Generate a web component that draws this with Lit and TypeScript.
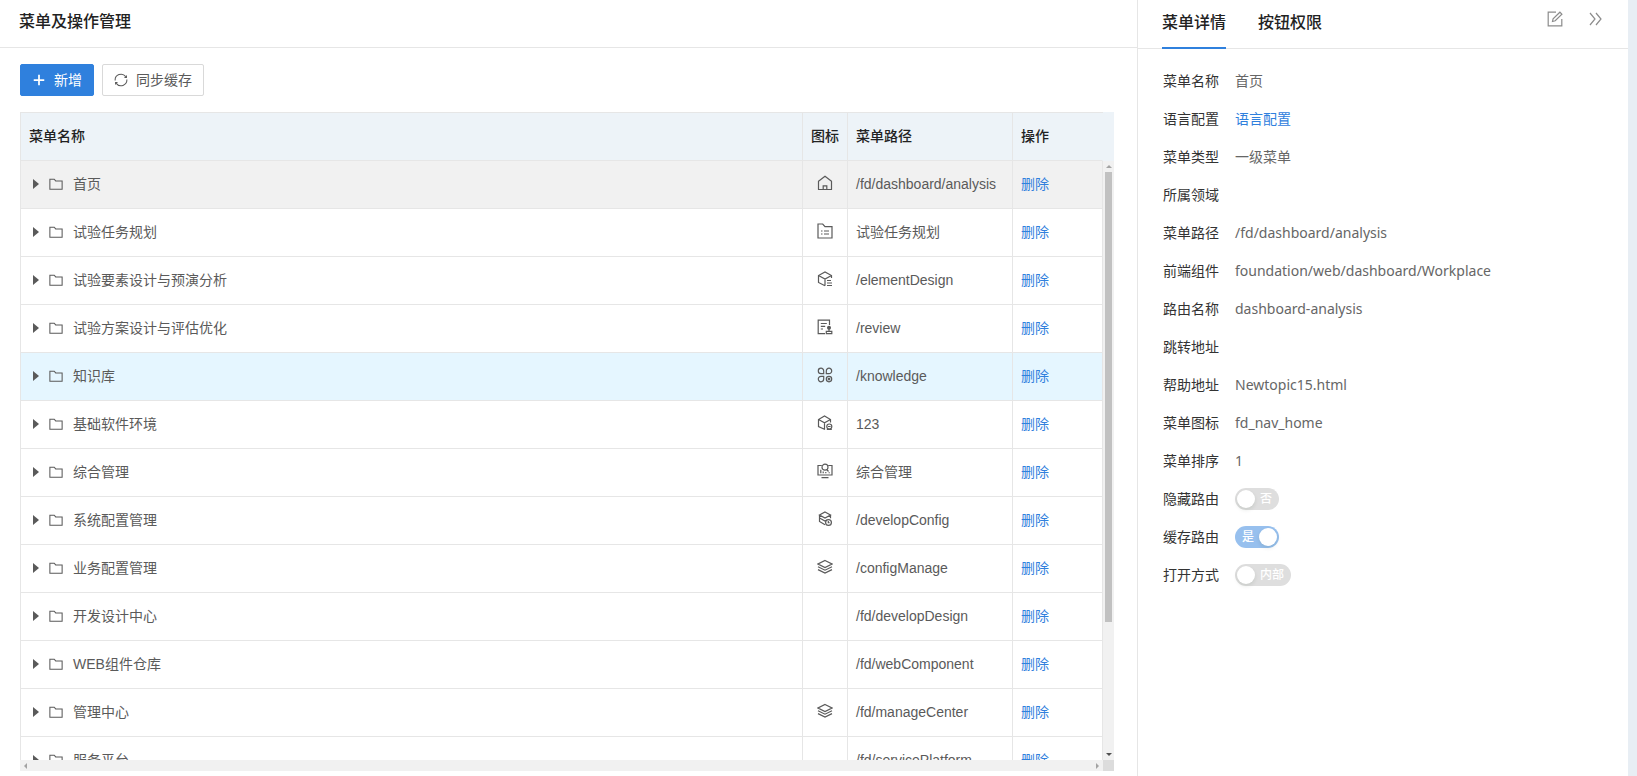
import { LitElement, html, css, svg, nothing, type TemplateResult } from "lit";
import { customElement, property, state } from "lit/decorators.js";
import { classMap } from "lit/directives/class-map.js";

interface MenuRow {
  name: string;
  icon: string;
  path: string;
}

interface DetailField {
  label: string;
  value?: string;
  href?: string;
  toggle?: boolean;
}

const ROWS: MenuRow[] = [
  { name: "首页", icon: "home", path: "/fd/dashboard/analysis" },
  { name: "试验任务规划", icon: "folderList", path: "试验任务规划" },
  { name: "试验要素设计与预演分析", icon: "cubeList", path: "/elementDesign" },
  { name: "试验方案设计与评估优化", icon: "review", path: "/review" },
  { name: "知识库", icon: "petals", path: "/knowledge" },
  { name: "基础软件环境", icon: "cubeBadge", path: "123" },
  { name: "综合管理", icon: "monitor", path: "综合管理" },
  { name: "系统配置管理", icon: "layersBadge", path: "/developConfig" },
  { name: "业务配置管理", icon: "layers", path: "/configManage" },
  { name: "开发设计中心", icon: "", path: "/fd/developDesign" },
  { name: "WEB组件仓库", icon: "", path: "/fd/webComponent" },
  { name: "管理中心", icon: "layers", path: "/fd/manageCenter" },
  { name: "服务平台", icon: "", path: "/fd/servicePlatform" },
];

const FIELDS: DetailField[] = [
  { label: "菜单名称", value: "首页" },
  { label: "语言配置", value: "语言配置", href: "#lang" },
  { label: "菜单类型", value: "一级菜单" },
  { label: "所属领域", value: "" },
  { label: "菜单路径", value: "/fd/dashboard/analysis" },
  { label: "前端组件", value: "foundation/web/dashboard/Workplace" },
  { label: "路由名称", value: "dashboard-analysis" },
  { label: "跳转地址", value: "" },
  { label: "帮助地址", value: "Newtopic15.html" },
  { label: "菜单图标", value: "fd_nav_home" },
  { label: "菜单排序", value: "1" },
  { label: "隐藏路由", value: "否", toggle: false },
  { label: "缓存路由", value: "是", toggle: true },
  { label: "打开方式", value: "内部", toggle: false },
];

const GLYPHS: Record<string, TemplateResult> = {
  plus: svg`<path d="M8 2v12M2 8h12" stroke-width="2"/>`,
  sync: svg`<path d="M1.300 8.600A6.700 6.700 0 0 1 13.400 4.200M14.700 7.400A6.700 6.700 0 0 1 2.600 11.800"/><path d="M14.800 2.200v3.400h-3.400zM1.200 13.800v-3.400h3.400z" fill="currentColor" stroke="none"/>`,
  folder: svg`<path d="M1 2.500h5l1.600 2h7.400v9.500H1z"/>`,
  home: svg`<path d="M1.500 6.200 8 1.200l6.500 5v8.300h-13z" stroke-linejoin="round"/><path d="M6.200 14.500v-3.700h3.600v3.700"/>`,
  folderList: svg`<path d="M1 1h4.700l2.300 2.700h7v11.300H1z"/><path d="M4 8h1.500M7 8h5M4 11h1.500M7 11h5"/>`,
  cubeList: svg`<path d="M8 14.800 1.500 11.500V4.500L8 1l6.500 3.500v2.500M1.500 4.500 8 8l6.500-3.500M8 8v6.800"/><path d="M10 9.500h4M10 12h5M10 14.500h5"/>`,
  review: svg`<path d="M8 14.700H1.200V1.200h11.300v4.800"/><path d="M3.800 4.500h6M3.800 7.300h4.400M3.800 10h2.200"/><circle cx="12" cy="8.800" r="1.400" fill="currentColor"/><path d="M12 9.500v2.700M9.300 14.700v-2.400h5.500v2.400z"/>`,
  petals: svg`<path d="M4 1.200A2.700 2.700 0 1 0 4 6.600h2.700V3.900A2.700 2.700 0 0 0 4 1.200zM12 1.200A2.700 2.700 0 0 0 9.300 3.900v2.700H12a2.700 2.700 0 1 0 0-5.400zM4 9.400h2.700v2.700A2.700 2.700 0 1 1 4 9.400z"/><circle cx="12" cy="12.100" r="2.700"/><circle cx="12" cy="12.100" r=".8"/>`,
  cubeBadge: svg`<path d="M8 14.500 1.500 11.500V4.500L7.500 1l6 3.500v3M1.500 4.500 7.500 7.700l6-3.200M7.500 7.700v6.800"/><circle cx="12.300" cy="11.500" r="2.500"/><path d="M11 11.500h2.600M9.800 14.400h5"/>`,
  monitor: svg`<path d="M4.800 2.500H1v9.500h14V2.500h-3.800M4.500 14.600h7"/><circle cx="8" cy="4.200" r="3"/><path d="M9.800 6.500l1.700 2M3.800 10.200V6.800M6.200 10.200V8.500M8.800 10.200V9M12.200 10.200V9.200"/>`,
  layersBadge: svg`<path d="M8 1 13.500 4 8 7 2.500 4zM2.500 4v3L8 10l2-1M2.500 7.200v3.300L8 13.800M13.500 4v3.200"/><circle cx="11.500" cy="11.500" r="2.900"/><path d="M11.300 10v1.700h1.200"/>`,
  layers: svg`<path d="M8 1.500 15 5 8 8.500 1 5z"/><path d="M1 7.800 8 11.200l7-3.400M1 10.600 8 14l7-3.400"/>`,
  edit: svg`<path d="M9 1.200H1.200v13.600h13.600V8"/><path d="M5.500 10.500l.6-2.800 6.800-6.500 2 2.100-6.700 6.500z"/>`,
  collapse: svg`<path d="M2 2l5 6-5 6M8 2l5 6-5 6"/>`,
};

@customElement("ui-icon")
export class UiIcon extends LitElement {
  @property() name = "";

  static styles = css`
    :host {
      display: inline-flex;
      flex: none;
      width: 16px;
      height: 16px;
    }
    .glyph {
      width: 100%;
      height: 100%;
      fill: none;
      stroke: currentColor;
      stroke-width: 1.2;
    }
  `;

  render() {
    return html`<svg class="glyph" viewBox="0 0 16 16" aria-hidden="true">${GLYPHS[this.name] ?? nothing}</svg>`;
  }
}

@customElement("menu-table")
export class MenuTable extends LitElement {
  @state() private selected = 0;

  static styles = css`
    :host {
      display: grid;
      grid-template-columns: minmax(0, 1fr) 11px;
      grid-template-rows: 49px minmax(0, 1fr) 11px;
      min-height: 0;
    }
    .viewport {
      grid-area: 1 / 1 / 3 / 2;
      overflow: hidden;
    }
    .table {
      width: 100%;
      table-layout: fixed;
      border-collapse: separate;
      border-spacing: 0;
      border: solid #e6e6e6;
      border-width: 1px 0 0 1px;
      color: #5a5a5a;
    }
    .icon-col {
      width: 45px;
    }
    .path-col {
      width: 165px;
    }
    .action-col {
      width: 90px;
    }
    th,
    td {
      box-sizing: border-box;
      height: 48px;
      padding: 0 8px 2px;
      border: solid #e6e6e6;
      border-width: 0 1px 1px 0;
      text-align: left;
      white-space: nowrap;
      line-height: 20px;
    }
    th {
      background: #edf3f8;
      color: #222;
      font-weight: 500;
    }
    th:last-child {
      border-right-color: #edf3f8;
    }
    .row.selected {
      background: #f1f1f1;
    }
    .row.hovered {
      background: #e5f6ff;
    }
    .icon-cell {
      padding: 0 0 6px;
      text-align: center;
    }
    .icon-cell ui-icon {
      vertical-align: middle;
    }
    .name {
      display: flex;
      align-items: center;
    }
    .name ui-icon {
      width: 14px;
      height: 14px;
      margin-right: 10px;
    }
    .expand {
      display: flex;
      justify-content: center;
      width: 14px;
      margin-right: 6px;
      padding: 0;
      border: 0;
      background: none;
      color: inherit;
    }
    .caret {
      border: solid transparent;
      border-width: 5px 0 5px 6px;
      border-left-color: currentColor;
    }
    .link {
      color: #2f80dd;
      text-decoration: none;
    }
    .head-fill {
      background: #edf3f8;
    }
    .scroll {
      display: flex;
      background: #f1f1f1;
      color: #a3a3a3;
    }
    .vertical {
      flex-direction: column;
    }
    .horizontal {
      justify-content: space-between;
    }
    .track {
      flex: 1;
      padding: 0 2px;
    }
    .thumb {
      height: 78%;
      background: #c1c1c1;
    }
    .arrow {
      display: grid;
      place-items: center;
      width: 11px;
      height: 11px;
    }
    .arrow::before {
      content: "";
      border: 3px solid transparent;
    }
    .up::before {
      border-top-width: 0;
      border-bottom-color: currentColor;
    }
    .down::before {
      border-bottom-width: 0;
      border-top-color: #505050;
    }
    .left::before {
      border-left-width: 0;
      border-right-color: currentColor;
    }
    .right::before {
      border-right-width: 0;
      border-left-color: currentColor;
    }
    .corner {
      background: #dcdcdc;
    }
  `;

  private renderRow(row: MenuRow, index: number) {
    const classes = { row: true, selected: index === this.selected, hovered: index === 4 };
    return html`<tr class=${classMap(classes)} @click=${() => (this.selected = index)}>
      <td>
        <div class="name">
          <button class="expand" type="button" aria-label="展开"><span class="caret"></span></button>
          <ui-icon name="folder"></ui-icon>
          <span>${row.name}</span>
        </div>
      </td>
      <td class="icon-cell">${row.icon ? html`<ui-icon name=${row.icon}></ui-icon>` : nothing}</td>
      <td>${row.path}</td>
      <td><a class="link" href="#delete">删除</a></td>
    </tr>`;
  }

  render() {
    return html`
      <div class="viewport">
        <table class="table">
          <colgroup>
            <col />
            <col class="icon-col" />
            <col class="path-col" />
            <col class="action-col" />
          </colgroup>
          <thead>
            <tr>
              <th scope="col">菜单名称</th>
              <th scope="col">图标</th>
              <th scope="col">菜单路径</th>
              <th scope="col">操作</th>
            </tr>
          </thead>
          <tbody>
            ${ROWS.map((row, index) => this.renderRow(row, index))}
          </tbody>
        </table>
      </div>
      <div class="head-fill"></div>
      <div class="scroll vertical">
        <span class="arrow up"></span>
        <div class="track"><div class="thumb"></div></div>
        <span class="arrow down"></span>
      </div>
      <div class="scroll horizontal">
        <span class="arrow left"></span>
        <span class="arrow right"></span>
      </div>
      <div class="corner"></div>
    `;
  }
}

@customElement("menu-detail")
export class MenuDetail extends LitElement {
  @state() private tab = 0;

  static styles = css`
    :host {
      display: block;
      font-family: "Noto Sans", "Noto Sans CJK SC", sans-serif;
    }
    .header {
      display: flex;
      justify-content: space-between;
      box-sizing: border-box;
      height: 49px;
      padding: 0 24px;
      border-bottom: 1px solid #e6e6e6;
    }
    .tabs {
      display: flex;
      gap: 32px;
      height: 49px;
    }
    .tab {
      box-sizing: border-box;
      height: 49px;
      padding: 0 0 6px;
      border: 0;
      border-bottom: 2px solid transparent;
      background: none;
      color: #222;
      font: 500 16px/24px "Noto Sans CJK SC", sans-serif;
    }
    .tab.active {
      border-bottom-color: #2f80dd;
    }
    .tools {
      display: flex;
      gap: 25px;
      height: 38px;
      align-items: center;
    }
    .tool {
      display: flex;
      padding: 0;
      border: 0;
      background: none;
      color: #8c8c8c;
    }
    .fields {
      padding: 13px 25px;
    }
    .field {
      display: flex;
      align-items: center;
      gap: 16px;
      height: 38px;
      line-height: 20px;
    }
    .label {
      flex: none;
      width: 56px;
      color: #333;
      white-space: nowrap;
    }
    .value {
      color: #666;
    }
    .link {
      color: #2f80dd;
      text-decoration: none;
    }
    .switch {
      display: flex;
      align-items: center;
      box-sizing: border-box;
      min-width: 44px;
      height: 22px;
      padding: 0 7px 0 2px;
      gap: 5px;
      border-radius: 11px;
      background: #dedede;
      color: #fff;
      font-size: 12px;
      font-weight: 500;
      line-height: 20px;
    }
    .switch.on {
      flex-direction: row-reverse;
      padding: 0 2px 0 7px;
      background: #97c0ee;
    }
    .knob {
      appearance: none;
      width: 18px;
      height: 18px;
      margin: 0;
      border-radius: 9px;
      background: #fff;
      box-shadow: 0 2px 4px rgba(0, 35, 11, 0.1);
    }
  `;

  private renderField(field: DetailField, index: number) {
    if (field.toggle === undefined) {
      return html`<div class="field">
        <span class="label">${field.label}</span>
        ${field.href
          ? html`<a class="link" href=${field.href}>${field.value}</a>`
          : html`<span class="value">${field.value}</span>`}
      </div>`;
    }
    const id = `toggle-${index}`;
    return html`<div class="field">
      <label class="label" for=${id}>${field.label}</label>
      <span class=${classMap({ switch: true, on: field.toggle })}>
        <input class="knob" id=${id} type="checkbox" role="switch" disabled .checked=${field.toggle} />
        <span>${field.value}</span>
      </span>
    </div>`;
  }

  render() {
    return html`
      <div class="header">
        <div class="tabs" role="tablist">
          ${["菜单详情", "按钮权限"].map(
            (text, i) => html`<button
              type="button"
              role="tab"
              aria-selected=${i === this.tab}
              class=${classMap({ tab: true, active: i === this.tab })}
              @click=${() => (this.tab = i)}
            >${text}</button>`
          )}
        </div>
        <div class="tools">
          <button class="tool" type="button" aria-label="编辑"><ui-icon name="edit"></ui-icon></button>
          <button class="tool" type="button" aria-label="收起"><ui-icon name="collapse"></ui-icon></button>
        </div>
      </div>
      <div class="fields">${FIELDS.map((field, index) => this.renderField(field, index))}</div>
    `;
  }
}

@customElement("app-root")
export class AppRoot extends LitElement {
  static styles = css`
    :host {
      display: flex;
      height: 100vh;
      overflow: hidden;
      background: #fff;
      font: 14px/20px "Liberation Sans", "Noto Sans CJK SC", sans-serif;
    }
    .main {
      display: flex;
      flex: 1;
      flex-direction: column;
      min-width: 0;
      border-right: 1px solid #e6e6e6;
    }
    .title {
      box-sizing: border-box;
      flex: none;
      height: 48px;
      margin: 0;
      padding: 10px 19px;
      border-bottom: 1px solid #e6e6e6;
      color: #222;
      font-size: 16px;
      font-weight: 500;
      line-height: 24px;
    }
    .content {
      display: flex;
      flex: 1;
      flex-direction: column;
      gap: 16px;
      min-height: 0;
      padding: 16px 23px 5px 20px;
    }
    .toolbar {
      display: flex;
      gap: 8px;
    }
    .button {
      display: flex;
      align-items: center;
      gap: 8px;
      height: 32px;
      padding: 0 11px;
      border: 1px solid #d9d9d9;
      border-radius: 2px;
      background: #fff;
      color: #5a5a5a;
      font: inherit;
    }
    .button ui-icon {
      width: 14px;
      height: 14px;
    }
    .primary {
      border-color: #2f80dd;
      background: #2f80dd;
      color: #fff;
    }
    menu-table {
      flex: 1;
    }
    menu-detail {
      flex: none;
      width: 490px;
    }
    .edge {
      flex: none;
      width: 9px;
      background: #e8eef4;
    }
  `;

  render() {
    return html`
      <main class="main">
        <h1 class="title">菜单及操作管理</h1>
        <div class="content">
          <div class="toolbar">
            <button class="button primary" type="button"><ui-icon name="plus"></ui-icon>新增</button>
            <button class="button" type="button"><ui-icon name="sync"></ui-icon>同步缓存</button>
          </div>
          <menu-table></menu-table>
        </div>
      </main>
      <menu-detail></menu-detail>
      <div class="edge"></div>
    `;
  }
}
